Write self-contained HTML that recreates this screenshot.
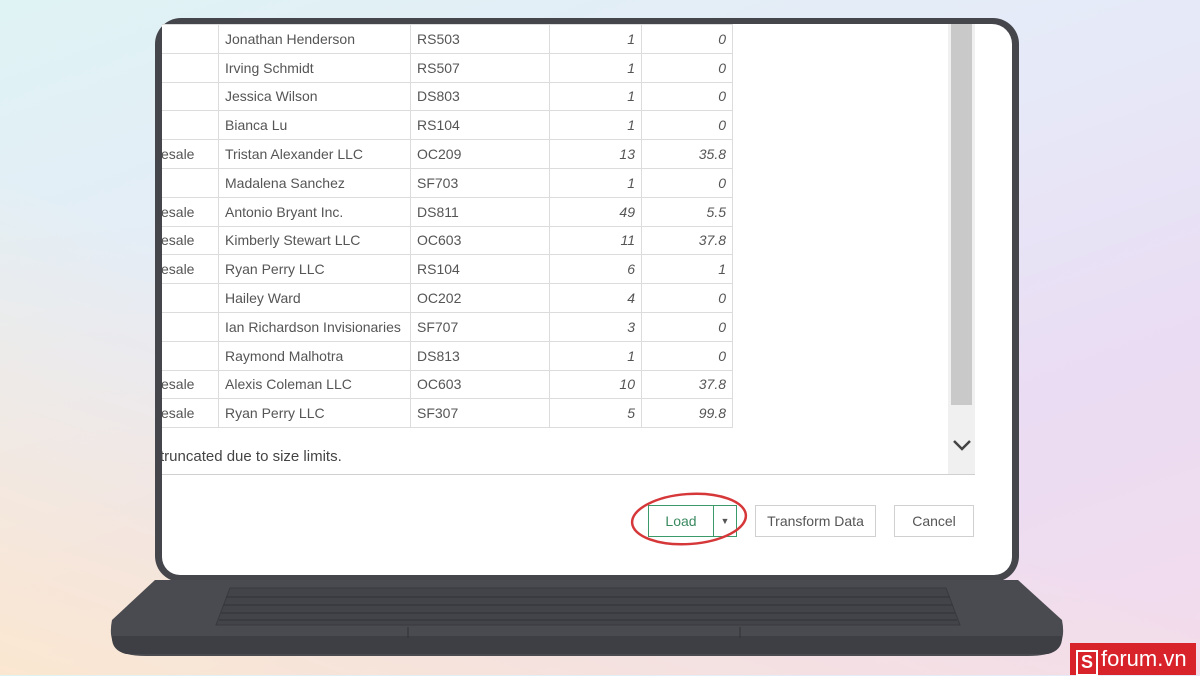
<!DOCTYPE html>
<html><head><style>
body{margin:0;width:1200px;height:675px;overflow:hidden;position:relative;font-family:"Liberation Sans",sans-serif;
background:linear-gradient(160deg,#dff3f4 0%,#e6eaf8 40%,#eadcf3 70%,#f3dcec 100%);}
.bg2{position:absolute;left:0;top:0;width:1200px;height:675px;background:linear-gradient(20deg,rgba(253,232,205,.9) 0%,rgba(253,232,205,0) 45%);}
.bezel{position:absolute;left:155px;top:18px;width:864px;height:564px;background:#45464c;border-radius:26px;}
.screen{position:absolute;left:162px;top:24px;width:850px;height:551px;background:#fff;border-radius:0 20px 18px 18px;overflow:hidden;}
table{position:absolute;left:-60px;top:0;border-collapse:collapse;font-size:14px;color:#555;}
td{border:1px solid #dcdcdc;height:27.8px;padding:0 6px;white-space:nowrap;}
td.n{text-align:right;font-style:italic;}
.sb{position:absolute;left:786px;top:0;width:27px;height:451px;background:#f0f0f0;}
.th{position:absolute;left:789px;top:0;width:21px;height:381px;background:#c9c9c9;}
.bl{position:absolute;left:0;top:450px;width:813px;height:1px;background:#d0d0d0;}
.btn{position:absolute;top:481px;height:30px;border:1px solid #d0d0d0;font-size:14px;color:#555;text-align:center;line-height:30px;}
.base{position:absolute;left:108px;top:580px;width:958px;height:76px;}
.logo{position:absolute;left:1070px;top:643px;width:126px;height:32px;background:#d8232a;color:#fff;font-size:22px;line-height:32px;}
</style></head><body><div class="bg2"></div>
<div class="bezel"></div>
<div class="screen">
<table>
<colgroup><col style="width:116px"><col style="width:192px"><col style="width:139px"><col style="width:92px"><col style="width:91px"></colgroup>
<tr><td></td><td>Jonathan Henderson</td><td>RS503</td><td class="n">1</td><td class="n">0</td></tr>
<tr><td></td><td>Irving Schmidt</td><td>RS507</td><td class="n">1</td><td class="n">0</td></tr>
<tr><td></td><td>Jessica Wilson</td><td>DS803</td><td class="n">1</td><td class="n">0</td></tr>
<tr><td></td><td>Bianca Lu</td><td>RS104</td><td class="n">1</td><td class="n">0</td></tr>
<tr><td style="padding-left:58px">esale</td><td>Tristan Alexander LLC</td><td>OC209</td><td class="n">13</td><td class="n">35.8</td></tr>
<tr><td></td><td>Madalena Sanchez</td><td>SF703</td><td class="n">1</td><td class="n">0</td></tr>
<tr><td style="padding-left:58px">esale</td><td>Antonio Bryant Inc.</td><td>DS811</td><td class="n">49</td><td class="n">5.5</td></tr>
<tr><td style="padding-left:58px">esale</td><td>Kimberly Stewart LLC</td><td>OC603</td><td class="n">11</td><td class="n">37.8</td></tr>
<tr><td style="padding-left:58px">esale</td><td>Ryan Perry LLC</td><td>RS104</td><td class="n">6</td><td class="n">1</td></tr>
<tr><td></td><td>Hailey Ward</td><td>OC202</td><td class="n">4</td><td class="n">0</td></tr>
<tr><td></td><td>Ian Richardson Invisionaries</td><td>SF707</td><td class="n">3</td><td class="n">0</td></tr>
<tr><td></td><td>Raymond Malhotra</td><td>DS813</td><td class="n">1</td><td class="n">0</td></tr>
<tr><td style="padding-left:58px">esale</td><td>Alexis Coleman LLC</td><td>OC603</td><td class="n">10</td><td class="n">37.8</td></tr>
<tr><td style="padding-left:58px">esale</td><td>Ryan Perry LLC</td><td>SF307</td><td class="n">5</td><td class="n">99.8</td></tr>
</table>
<div class="sb"></div><div class="th"></div>
<svg style="position:absolute;left:790px;top:414px" width="20" height="14"><path d="M2 3 L10 11 L18 3" stroke="#444" stroke-width="2.5" fill="none"/></svg>
<div class="bl"></div>
<div style="position:absolute;left:-2px;top:424px;font-size:15px;color:#444">truncated due to size limits.</div>
<div class="btn" style="left:486px;width:87px;border-color:#3a9a6a;color:#3a8a60;"><span style="position:absolute;left:0;width:64px">Load</span><span style="position:absolute;left:64px;top:0;width:22px;height:30px;border-left:1px solid #3a9a6a;font-size:9px;color:#555">▼</span></div>
<div class="btn" style="left:593px;width:119px">Transform Data</div>
<div class="btn" style="left:732px;width:78px">Cancel</div>
</div>
<svg style="position:absolute;left:625px;top:488px" width="130" height="62"><ellipse cx="64" cy="31" rx="57" ry="25" stroke="#d6383a" stroke-width="2.5" fill="none" transform="rotate(-4 64 31)"/></svg>
<svg class="base" viewBox="0 0 958 76">
<path d="M47 0 H910 L954 40 Q958 60 948 70 Q940 76 920 76 H38 Q18 76 10 70 Q0 60 4 40 Z" fill="#4a4b50"/>
<path d="M4 56 H954 Q955 70 940 74 H18 Q3 70 4 56Z" fill="#3e3f44"/>
<path d="M122 8 H838 L852 45 H108 Z" fill="#43444a" stroke="#38393e"/>
<g stroke="#35363a" stroke-width="1.2"><line x1="118" y1="17" x2="842" y2="17"/><line x1="115" y1="25" x2="845" y2="25"/><line x1="113" y1="33" x2="847" y2="33"/><line x1="111" y1="40" x2="849" y2="40"/><line x1="300" y1="47" x2="300" y2="58"/><line x1="632" y1="47" x2="632" y2="58"/></g>
</svg>
<div class="logo"><span style="display:inline-block;margin:0 3px 0 6px;width:18px;height:22px;border:2px solid #fff;line-height:20px;text-align:center;font-weight:bold;font-size:18px;vertical-align:-2px">S</span>forum.vn</div>
</body></html>
